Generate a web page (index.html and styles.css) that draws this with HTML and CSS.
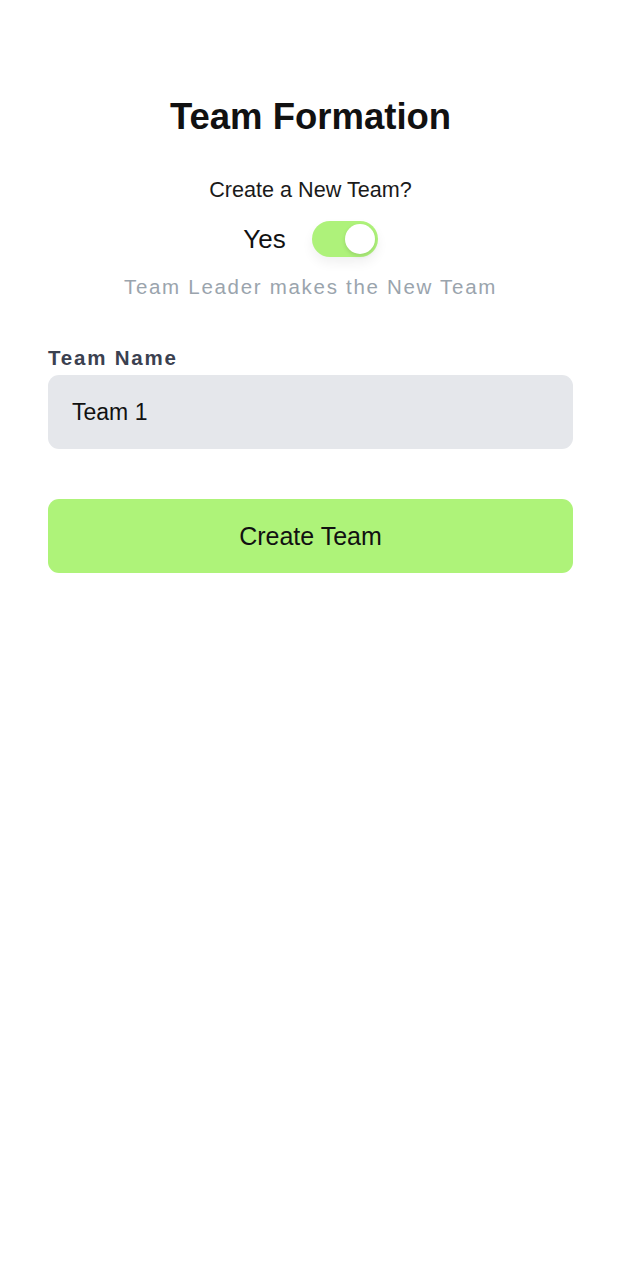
FILE: index.html
```html
<!DOCTYPE html>
<html>
<head>
<meta charset="utf-8">
<link rel="stylesheet" href="styles.css">
</head>
<body>
<main class="page">
  <h1 class="title">Team Formation</h1>
  <p class="question">Create a New Team?</p>
  <div class="toggle-row">
    <span class="toggle-label">Yes</span>
    <span class="toggle"><span class="knob"></span></span>
  </div>
  <p class="hint">Team Leader makes the New Team</p>
  <label class="field-label">Team Name</label>
  <div class="input">Team 1</div>
  <button class="btn">Create Team</button>
</main>
</body>
</html>
```
FILE: styles.css
```css
* { box-sizing: border-box; }
html, body { margin: 0; padding: 0; background: #fff; }
body { font-family: "Liberation Sans", Arial, sans-serif; color: #111; }
.page {
  padding: 96px 48px 0;
  display: flex;
  flex-direction: column;
}
.title {
  margin: 0;
  text-align: center;
  font-size: 36.5px;
  font-weight: 700;
  line-height: 42px;
  color: #111;
}
.question {
  margin: 40px 0 0;
  text-align: center;
  font-size: 21.6px;
  line-height: 24px;
  color: #1a1a1a;
}
.toggle-row {
  margin-top: 19px;
  display: flex;
  justify-content: center;
  align-items: center;
  gap: 26px;
}
.toggle-label { font-size: 26px; line-height: 36px; color: #111; }
.toggle {
  width: 66px;
  height: 36px;
  border-radius: 18px;
  background: #aef27a;
  display: flex;
  align-items: center;
  justify-content: flex-end;
  padding: 3px;
  box-shadow: 0 6px 12px rgba(0,0,0,0.06);
}
.knob {
  width: 30px;
  height: 30px;
  border-radius: 50%;
  background: #fff;
  box-shadow: 0 2px 4px rgba(0,0,0,0.12);
}
.hint {
  margin: 17px 0 0;
  text-align: center;
  font-size: 20.5px;
  line-height: 26px;
  letter-spacing: 1.7px;
  color: #9aa4ad;
}
.field-label {
  margin-top: 46px;
  font-size: 20.5px;
  font-weight: 700;
  line-height: 24px;
  letter-spacing: 1.8px;
  color: #3b4150;
}
.input {
  margin-top: 5px;
  height: 74px;
  border-radius: 11px;
  background: #e5e7eb;
  padding: 0 24px;
  display: flex;
  align-items: center;
  font-size: 23px;
  color: #111;
}
.btn {
  margin-top: 50px;
  height: 74px;
  border: none;
  border-radius: 11px;
  background: #aef379;
  font-family: inherit;
  font-size: 25px;
  color: #111;
  cursor: pointer;
}
```
